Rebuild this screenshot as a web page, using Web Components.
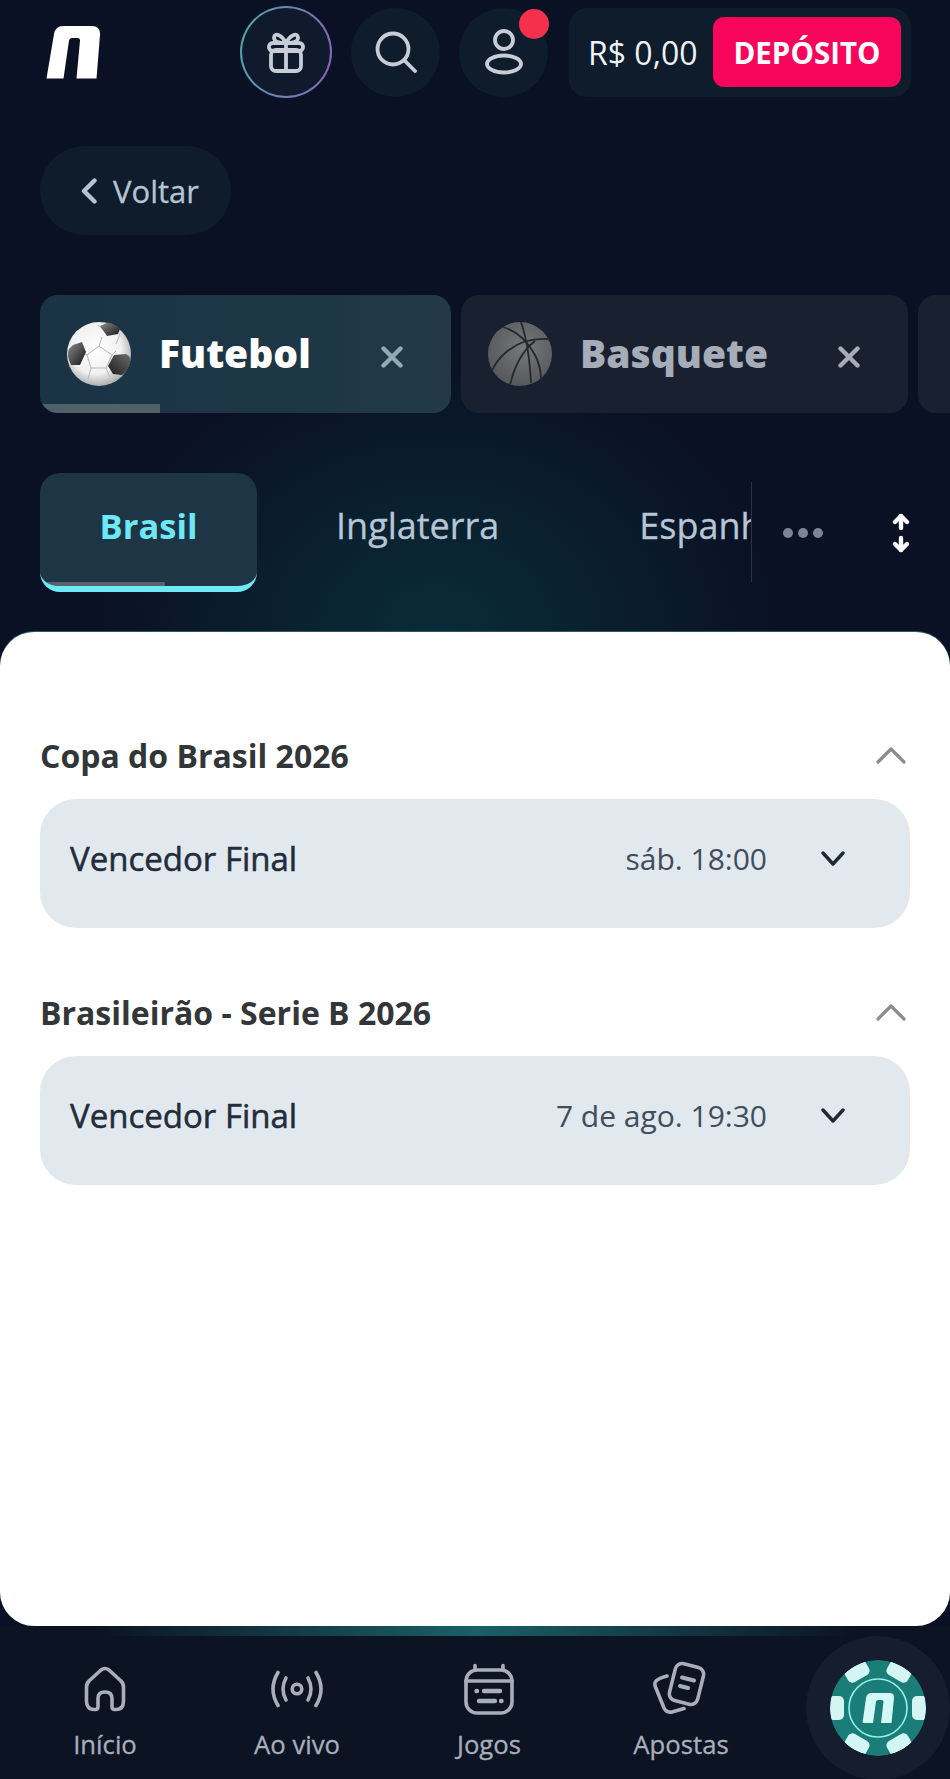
<!DOCTYPE html>
<html lang="pt-BR">
<head>
<meta charset="utf-8">
<title>Futebol</title>
<style>
    html, body { margin: 0; background: #0a1124; }
    body { width: 950px; height: 1779px; overflow: hidden; font-family: "Open Sans", "Noto Sans", sans-serif; }
</style>
</head>
<body>
<sports-app>
    <top-bar slot="hero"></top-bar>
    <back-button slot="hero" label="Voltar"></back-button>
    <sport-tabs slot="hero"></sport-tabs>
    <region-tabs slot="hero"></region-tabs>
    <league-section title="Copa do Brasil 2026">
        <market-row name="Vencedor Final" when="sáb. 18:00"></market-row>
    </league-section>
    <league-section title="Brasileirão - Serie B 2026">
        <market-row name="Vencedor Final" when="7 de ago. 19:30"></market-row>
    </league-section>
    <bottom-nav slot="nav"></bottom-nav>
</sports-app>

<script>
const FONT = `"Open Sans", "Noto Sans", sans-serif`;

const ICONS = {
    gift: { w: 38, h: 41, sw: 3.8, body: `
        <rect x="4" y="18" width="30" height="21" rx="5"/>
        <rect x="1.900" y="11" width="34.200" height="8" rx="4"/>
        <path d="M19 11V39M19 11C15 3 7.500 0 7 5.500C6.700 10 13 11 19 11ZM19 11C23 3 30.500 0 31 5.500C31.300 10 25 11 19 11Z"/>` },
    search: { w: 42, h: 42, sw: 3.8, body: `
        <circle cx="18" cy="18" r="15.500"/>
        <path d="M29.500 29.500L40 40"/>` },
    person: { w: 38, h: 46, sw: 3.8, body: `
        <circle cx="19" cy="11" r="9"/>
        <ellipse cx="19" cy="35" rx="17" ry="8.500"/>` },
    back: { w: 16, h: 26, sw: 4.4, body: `<path d="M13.500 2.500L3 13L13.500 23.500"/>` },
    close: { w: 22, h: 22, sw: 4.4, body: `<path d="M2.500 2.500L19.500 19.500M19.500 2.500L2.500 19.500"/>` },
    up: { w: 30, h: 18, sw: 3.2, body: `<path d="M2 16L15 3L28 16"/>` },
    down: { w: 24, h: 15, sw: 3.4, body: `<path d="M2 2L12 13L22 2"/>` },
    updown: { w: 18, h: 42, sw: 4.4, body: `
        <path d="M9 4V16M9 26V38"/>
        <path d="M3 10L9 4L15 10M3 32L9 38L15 32"/>` },
    home: { w: 42, h: 46, sw: 3.6, body: `
        <path d="M2.500 21Q2.500 17 5.500 14.500L17 4Q21 1 25 4L36.500 14.500Q39.500 17 39.500 21V35Q39.500 43.500 32 43.500H30.500Q28 43.500 28 40.500V32.500Q28 26 21 26Q14 26 14 32.500V40.500Q14 43.500 11.500 43.500H10Q2.500 43.500 2.500 35Z"/>` },
    live: { w: 58, h: 38, sw: 3.6, body: `
        <circle cx="29" cy="19" r="4.800"/>
        <path d="M18 8Q12 19 18 30M40 8Q46 19 40 30"/>
        <path d="M10 2.500Q0 19 10 35.500M48 2.500Q58 19 48 35.500"/>` },
    games: { w: 50, h: 52, sw: 3.6, body: `
        <rect x="2" y="7" width="46" height="43" rx="11"/>
        <path d="M2 18H48M11 7V2.500M39 7V2.500"/>
        <path d="M20 28H36M15 38H31" stroke-width="4.400"/>
        <path d="M12.500 28H13M37 38H37.500" stroke-width="4.400"/>` },
    bets: { w: 56, h: 56, sw: 3.6, body: `
        <rect x="19" y="4" width="29" height="38" rx="7" transform="rotate(14 33.500 23)"/>
        <path d="M14 15Q6 17 3 20Q1 22 2.500 26L11 47Q13.500 52 19 51L31 47.500"/>
        <path d="M29 16.500L41 19.500M27 25L35 27" stroke-width="4"/>` }
};

class NIcon extends HTMLElement {
    constructor() {
        super();
        this.attachShadow({ mode: 'open' });
    }

    connectedCallback() {
        const icon = ICONS[this.getAttribute('name')];
        this.shadowRoot.innerHTML = `
            <style>
                :host { display: inline-flex; flex: none; line-height: 0; }
                svg { fill: none; stroke: currentColor; stroke-linecap: round; stroke-linejoin: round; }
            </style>
            <svg width="${icon.w}" height="${icon.h}" viewBox="0 0 ${icon.w} ${icon.h}" stroke-width="${icon.sw}">${icon.body}</svg>
        `;
    }
}

class SportsApp extends HTMLElement {
    constructor() {
        super();
        this.attachShadow({ mode: 'open' });
        this.shadowRoot.innerHTML = `
            <style>
                :host { display: flex; flex-direction: column; width: 950px; height: 1779px; overflow: hidden; font-family: ${FONT}; background: #0a1124; }
                .hero {
                    height: 632px;
                    flex: none;
                    background: radial-gradient(ellipse 340px 280px at 46% 100%, #0a2b39 0%, #0a2230 40%, rgba(10,17,36,0) 100%);
                }
                .panel {
                    flex: 1;
                    background: #fff;
                    border-radius: 34px;
                    padding-top: 83px;
                    box-sizing: border-box;
                    display: flex;
                    flex-direction: column;
                    gap: 44px;
                    box-shadow: 0 -1px 0 #2c5a63;
                }
            </style>
            <div class="hero"><slot name="hero"></slot></div>
            <div class="panel"><slot></slot></div>
            <slot name="nav"></slot>
        `;
    }
}

class TopBar extends HTMLElement {
    constructor() {
        super();
        this.attachShadow({ mode: 'open' });
        this.shadowRoot.innerHTML = `
            <style>
                :host { display: flex; align-items: center; height: 90px; margin-top: 7px; padding-left: 46px; color: #c7ccd6; }
                .logo { width: 54px; height: 54px; margin-right: 140px; flex: none; }
                icon-button { margin-right: 19px; }
                icon-button[dot] { margin-right: 21px; }
            </style>
            <svg class="logo" viewBox="0 0 54 54">
                <path fill="#fff" d="M0.500 53.500L8 9Q9.500 1 17 1H46Q54.500 1 54 10L50.500 53.500H30.500L34 15.500Q34.200 13 31.500 13H26Q23.500 13 23 15.500L17.500 53.500Z"/>
            </svg>
            <icon-button ring><n-icon name="gift"></n-icon></icon-button>
            <icon-button><n-icon name="search"></n-icon></icon-button>
            <icon-button dot><n-icon name="person"></n-icon></icon-button>
            <balance-box amount="R$ 0,00" action="DEPÓSITO"></balance-box>
        `;
    }
}

class IconButton extends HTMLElement {
    constructor() {
        super();
        this.attachShadow({ mode: 'open' });
        this.shadowRoot.innerHTML = `
            <style>
                :host { display: flex; align-items: center; justify-content: center; position: relative; width: 89px; height: 89px; border-radius: 50%; background: #0f1c2b; flex: none; box-sizing: border-box; }
                :host([ring]) {
                    width: 92px;
                    height: 92px;
                    border: 2px solid transparent;
                    background: linear-gradient(#0f1a2c, #0f1a2c) padding-box, linear-gradient(100deg, #4fa6ab, #8d62b6) border-box;
                }
                .dot { display: none; position: absolute; top: 1px; right: -1px; width: 30px; height: 30px; border-radius: 50%; background: #f4304c; }
                :host([dot]) .dot { display: block; }
            </style>
            <slot></slot>
            <span class="dot"></span>
        `;
    }
}

class BalanceBox extends HTMLElement {
    constructor() {
        super();
        this.attachShadow({ mode: 'open' });
    }

    connectedCallback() {
        this.shadowRoot.innerHTML = `
            <style>
                :host { display: flex; align-items: center; justify-content: space-between; width: 342px; height: 89px; box-sizing: border-box; padding: 0 10px 0 19px; background: #0f1c2b; border-radius: 18px; flex: none; }
                .amount { font-size: 32px; color: #eef2f6; white-space: nowrap; }
                .action { display: flex; align-items: center; justify-content: center; width: 188px; height: 70px; border-radius: 11px; background: #f7055b; color: #fff; font-size: 29.500px; font-weight: 700; }
            </style>
            <span class="amount">${this.getAttribute('amount')}</span>
            <span class="action">${this.getAttribute('action')}</span>
        `;
    }
}

class BackButton extends HTMLElement {
    constructor() {
        super();
        this.attachShadow({ mode: 'open' });
    }

    connectedCallback() {
        this.shadowRoot.innerHTML = `
            <style>
                :host { display: flex; align-items: center; gap: 16px; width: 191px; height: 89px; box-sizing: border-box; margin: 49px 0 0 40px; padding-left: 41px; border-radius: 45px; background: #0f1c2b; color: #b5c4d4; font-size: 31px; -webkit-text-stroke: 0.3px currentColor; }
            </style>
            <n-icon name="back"></n-icon>
            <span>${this.getAttribute('label')}</span>
        `;
    }
}

class SportTabs extends HTMLElement {
    constructor() {
        super();
        this.attachShadow({ mode: 'open' });
        this.shadowRoot.innerHTML = `
            <style>
                :host { display: flex; gap: 10px; margin-top: 60px; padding-left: 40px; height: 118px; overflow: hidden; }
            </style>
            <sport-tab active label="Futebol" width="411"><soccer-ball></soccer-ball></sport-tab>
            <sport-tab label="Basquete" width="447"><basket-ball></basket-ball></sport-tab>
            <sport-tab width="120"></sport-tab>
        `;
    }
}

class SportTab extends HTMLElement {
    constructor() {
        super();
        this.attachShadow({ mode: 'open' });
    }

    connectedCallback() {
        const label = this.getAttribute('label');
        this.style.width = this.getAttribute('width') + 'px';
        this.shadowRoot.innerHTML = `
            <style>
                :host { display: flex; align-items: center; position: relative; flex: none; box-sizing: border-box; padding-left: 26px; background: #19202f; border-radius: 18px; color: #a6acb8; overflow: hidden; }
                :host([active]) { background: linear-gradient(90deg, #1b3445, #1e3747 70%, #23394a); color: #fff; }
                .name { margin-left: 27px; font-size: 39px; font-weight: 800; white-space: nowrap; position: relative; top: -2px; }
                n-icon { position: absolute; right: 48px; top: 51px; color: #a6acb8; }
                :host([active]) n-icon { color: #93a9b4; }
                .progress { display: none; position: absolute; left: 0; bottom: 0; width: 120px; height: 9px; background: #4f6169; }
                :host([active]) .progress { display: block; }
            </style>
            <slot></slot>
            ${label ? `<span class="name">${label}</span><n-icon name="close"></n-icon>` : ''}
            <span class="progress"></span>
        `;
    }
}

class SoccerBall extends HTMLElement {
    constructor() {
        super();
        this.attachShadow({ mode: 'open' });
        this.shadowRoot.innerHTML = `
            <style>:host { display: block; width: 66px; height: 66px; flex: none; }</style>
            <svg width="66" height="66" viewBox="0 0 66 66">
                <defs>
                    <radialGradient id="w" cx="45%" cy="42%" r="60%">
                        <stop offset="0" stop-color="#fff"/><stop offset=".65" stop-color="#f1f1f1"/><stop offset="1" stop-color="#a9a9a9"/>
                    </radialGradient>
                    <linearGradient id="b1" x1="0" y1="0" x2="1" y2="1">
                        <stop offset="0" stop-color="#8b8b8b"/><stop offset="1" stop-color="#161616"/>
                    </linearGradient>
                    <linearGradient id="b2" x1="1" y1="0" x2="0" y2="1">
                        <stop offset="0" stop-color="#6b6b6b"/><stop offset="1" stop-color="#1d1d1d"/>
                    </linearGradient>
                </defs>
                <circle cx="33" cy="33" r="32" fill="url(#w)"/>
                <path d="M32 4L40 11M54 13L50 23M33 25L21 34L25 47L40 47L46 34ZM33 25L36 16M21 34L13 30M25 47L22 58M40 47L44 56M46 34L50 30" fill="none" stroke="#b5b5b5" stroke-width="1"/>
                <path d="M34 5L42 1.500Q50 3 54 8L52 13L41 15Z" fill="url(#b1)"/>
                <path d="M7 24L16 21L20 31L14 44L5 44Q0 34 3 28Z" fill="url(#b1)"/>
                <path d="M48 34L60 33Q65 36 64.500 40Q62 50 56 54L47 53L42 45Z" fill="url(#b2)"/>
            </svg>
        `;
    }
}

class BasketBall extends HTMLElement {
    constructor() {
        super();
        this.attachShadow({ mode: 'open' });
        this.shadowRoot.innerHTML = `
            <style>:host { display: block; width: 66px; height: 66px; flex: none; }</style>
            <svg width="66" height="66" viewBox="0 0 66 66">
                <defs>
                    <radialGradient id="g" cx="55%" cy="40%" r="62%">
                        <stop offset="0" stop-color="#76787c"/><stop offset="1" stop-color="#55575b"/>
                    </radialGradient>
                    <clipPath id="c"><circle cx="33" cy="33" r="32"/></clipPath>
                </defs>
                <circle cx="33" cy="33" r="32" fill="url(#g)"/>
                <g clip-path="url(#c)" fill="none" stroke="#26282c" stroke-width="1.800">
                    <path d="M16 6Q36 12 48 34Q54 46 54 58"/>
                    <path d="M34 1Q42 24 44 62"/>
                    <path d="M62 18Q34 16 16 34Q8 42 5 50"/>
                    <path d="M48 20Q30 34 23 64"/>
                </g>
            </svg>
        `;
    }
}

class RegionTabs extends HTMLElement {
    constructor() {
        super();
        this.attachShadow({ mode: 'open' });
        this.shadowRoot.innerHTML = `
            <style>
                :host { display: flex; align-items: center; height: 119px; margin-top: 60px; padding-left: 40px; }
                .list { display: flex; align-items: center; width: 711px; height: 119px; overflow: hidden; flex: none; }
                .tab { flex: none; font-size: 36px; color: #b6c6d6; white-space: nowrap; position: relative; top: -7px; -webkit-text-stroke: 0.3px currentColor; }
                .active { display: flex; align-items: center; justify-content: center; box-sizing: border-box; position: relative; width: 217px; height: 119px; border-radius: 20px; background: #1e3545; border-bottom: 6px solid #6ee9f5; color: #6fe8f5; font-size: 34.500px; font-weight: 700; flex: none; overflow: hidden; margin-right: 79px; padding-bottom: 8px; }
                .active i { position: absolute; left: 0; bottom: -6px; width: 125px; height: 10px; background: rgba(110,120,125,.7); }
                .tab + .tab { margin-left: 140px; }
                .rule { width: 1px; height: 100px; background: #2a3544; flex: none; margin-top: -1px; }
                .dots { display: flex; gap: 5px; margin-left: 31px; flex: none; }
                .dots i { width: 10px; height: 10px; border-radius: 50%; background: #7d8494; }
                n-icon { margin-left: 69px; color: #fff; }
            </style>
            <div class="list">
                <span class="active">Brasil<i></i></span>
                <span class="tab">Inglaterra</span>
                <span class="tab">Espanha</span>
            </div>
            <span class="rule"></span>
            <span class="dots"><i></i><i></i><i></i></span>
            <n-icon name="updown"></n-icon>
        `;
    }
}

class LeagueSection extends HTMLElement {
    constructor() {
        super();
        this.attachShadow({ mode: 'open' });
    }

    connectedCallback() {
        this.shadowRoot.innerHTML = `
            <style>
                :host { display: block; padding: 0 40px; }
                .head { display: flex; align-items: center; justify-content: space-between; box-sizing: border-box; height: 84px; padding-bottom: 4px; }
                .title { font-size: 32px; font-weight: 700; color: #333638; }
                n-icon { color: #8a8d8f; margin-right: 4px; }
            </style>
            <div class="head">
                <span class="title">${this.getAttribute('title')}</span>
                <n-icon name="up"></n-icon>
            </div>
            <slot></slot>
        `;
    }
}

class MarketRow extends HTMLElement {
    constructor() {
        super();
        this.attachShadow({ mode: 'open' });
    }

    connectedCallback() {
        this.shadowRoot.innerHTML = `
            <style>
                :host { display: flex; align-items: center; height: 129px; box-sizing: border-box; padding: 0 65px 10px 30px; background: #e1e8ee; border-radius: 36px; }
                .name { font-size: 33px; color: #222c3a; flex: 1; -webkit-text-stroke: 0.5px currentColor; }
                .when { font-size: 30px; color: #414c5c; margin-right: 54px; }
                n-icon { color: #1f2a37; }
            </style>
            <span class="name">${this.getAttribute('name')}</span>
            <span class="when">${this.getAttribute('when')}</span>
            <n-icon name="down"></n-icon>
        `;
    }
}

class BottomNav extends HTMLElement {
    constructor() {
        super();
        this.attachShadow({ mode: 'open' });
        this.shadowRoot.innerHTML = `
            <style>
                :host { display: block; height: 153px; flex: none; background: #0c1323; overflow: hidden; position: relative; font-family: ${FONT}; }
                .glow { height: 10px; background: linear-gradient(90deg, rgba(26,95,100,0) 10%, #1a6066 50%, rgba(26,95,100,0) 90%); }
                .items { display: grid; grid-template-columns: repeat(4, 192px) 1fr; padding-left: 9px; height: 143px; }
            </style>
            <div class="glow"></div>
            <div class="items">
                <nav-item icon="home" label="Início"></nav-item>
                <nav-item icon="live" label="Ao vivo"></nav-item>
                <nav-item icon="games" label="Jogos"></nav-item>
                <nav-item icon="bets" label="Apostas"></nav-item>
                <casino-chip></casino-chip>
            </div>
        `;
    }
}

class NavItem extends HTMLElement {
    constructor() {
        super();
        this.attachShadow({ mode: 'open' });
    }

    connectedCallback() {
        this.shadowRoot.innerHTML = `
            <style>
                :host { display: flex; flex-direction: column; align-items: center; color: #a9aebb; }
                .slot { display: flex; align-items: center; justify-content: center; height: 52px; margin-top: 27px; }
                .label { font-size: 25.700px; line-height: 34px; margin-top: 13px; -webkit-text-stroke: 0.3px currentColor; }
            </style>
            <div class="slot"><n-icon name="${this.getAttribute('icon')}"></n-icon></div>
            <span class="label">${this.getAttribute('label')}</span>
        `;
    }
}

class CasinoChip extends HTMLElement {
    constructor() {
        super();
        this.attachShadow({ mode: 'open' });
        this.shadowRoot.innerHTML = `
            <style>
                :host { display: flex; align-items: flex-start; justify-content: center; padding: 24px 0 0 29px; }
                svg { border-radius: 50%; box-shadow: 0 0 0 24px #151d2e; }
            </style>
            <svg width="96" height="96" viewBox="-48 -48 96 96">
                <defs><clipPath id="disc"><circle r="48"/></clipPath></defs>
                <circle r="48" fill="#1a7d78"/>
                <g clip-path="url(#disc)" fill="#d3f5f3">
                    <rect x="34" y="-12" width="16" height="24" rx="5"/>
                    <rect x="34" y="-12" width="16" height="24" rx="5" transform="rotate(60)"/>
                    <rect x="34" y="-12" width="16" height="24" rx="5" transform="rotate(120)"/>
                    <rect x="34" y="-12" width="16" height="24" rx="5" transform="rotate(180)"/>
                    <rect x="34" y="-12" width="16" height="24" rx="5" transform="rotate(240)"/>
                    <rect x="34" y="-12" width="16" height="24" rx="5" transform="rotate(300)"/>
                </g>
                <circle r="29" fill="none" stroke="#9af0ec" stroke-width="1.600"/>
                <path transform="translate(-15.500 -15)" fill="#d3f8f6" d="M0 30L3.500 5Q4.500 0 9 0H27Q32 0 31.500 5L29 30H18.500L21 8.500Q21 7 19.500 7H15.500Q14 7 13.500 8.500L10.500 30Z"/>
            </svg>
        `;
    }
}

customElements.define('n-icon', NIcon);
customElements.define('sports-app', SportsApp);
customElements.define('top-bar', TopBar);
customElements.define('icon-button', IconButton);
customElements.define('balance-box', BalanceBox);
customElements.define('back-button', BackButton);
customElements.define('sport-tabs', SportTabs);
customElements.define('sport-tab', SportTab);
customElements.define('soccer-ball', SoccerBall);
customElements.define('basket-ball', BasketBall);
customElements.define('region-tabs', RegionTabs);
customElements.define('league-section', LeagueSection);
customElements.define('market-row', MarketRow);
customElements.define('bottom-nav', BottomNav);
customElements.define('nav-item', NavItem);
customElements.define('casino-chip', CasinoChip);
</script>
</body>
</html>
